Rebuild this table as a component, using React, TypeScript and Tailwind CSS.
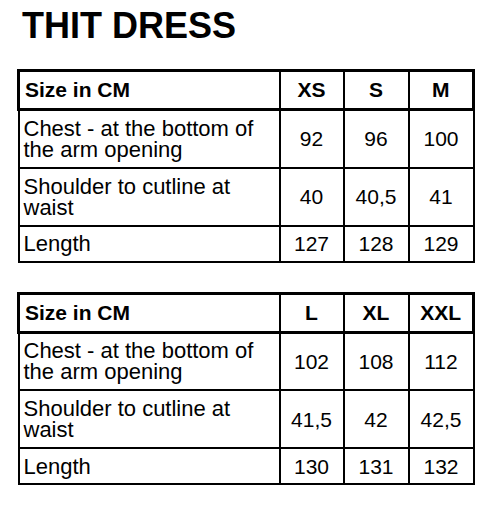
const tables = [
  {
    sizes: ["XS", "S", "M"],
    rows: [
      { label: "Chest - at the bottom of the arm opening", values: ["92", "96", "100"] },
      { label: "Shoulder to cutline at waist", values: ["40", "40,5", "41"] },
      { label: "Length", values: ["127", "128", "129"] },
    ],
  },
  {
    sizes: ["L", "XL", "XXL"],
    rows: [
      { label: "Chest - at the bottom of the arm opening", values: ["102", "108", "112"] },
      { label: "Shoulder to cutline at waist", values: ["41,5", "42", "42,5"] },
      { label: "Length", values: ["130", "131", "132"] },
    ],
  },
];

function SizeTable({ sizes, rows }: { sizes: string[]; rows: { label: string; values: string[] }[] }) {
  return (
    <table className="w-[455px] table-fixed border-collapse text-black">
      <colgroup>
        <col className="w-[261px]" />
        <col className="w-[64px]" />
        <col className="w-[65px]" />
        <col className="w-[65px]" />
      </colgroup>
      <thead>
        <tr className="h-[39px]">
          <th className="border-y-[3px] border-l-[3px] border-r-2 border-black pl-[5px] text-left text-[21px] font-bold">
            Size in CM
          </th>
          {sizes.map((s, i) => (
            <th
              key={s}
              className={`border-y-[3px] border-l-2 border-black text-center text-[21px] font-bold ${
                i === sizes.length - 1 ? "border-r-[3px]" : "border-r-2"
              }`}
            >
              {s}
            </th>
          ))}
        </tr>
      </thead>
      <tbody>
        {rows.map((row) => (
          <tr key={row.label} className={row.label === "Length" ? "h-[36px]" : "h-[58px]"}>
            <td className="border-2 border-black pl-[4px] pr-1 text-[22px] leading-[21px]">{row.label}</td>
            {row.values.map((v, i) => (
              <td key={i} className="border-2 border-black text-center text-[21px] leading-[21px]">
                {v}
              </td>
            ))}
          </tr>
        ))}
      </tbody>
    </table>
  );
}

export default function App() {
  return (
    <div className="h-[506px] w-[500px] bg-white pl-[17px] font-['Liberation_Sans',Arial,sans-serif]">
      <h1 className="pt-[6px] pl-[5px] text-[36px] font-bold leading-[40px] text-black">THIT DRESS</h1>
      <div className="mt-[23px] flex flex-col gap-[29px]">
        {tables.map((t) => (
          <SizeTable key={t.sizes[0]} sizes={t.sizes} rows={t.rows} />
        ))}
      </div>
    </div>
  );
}
